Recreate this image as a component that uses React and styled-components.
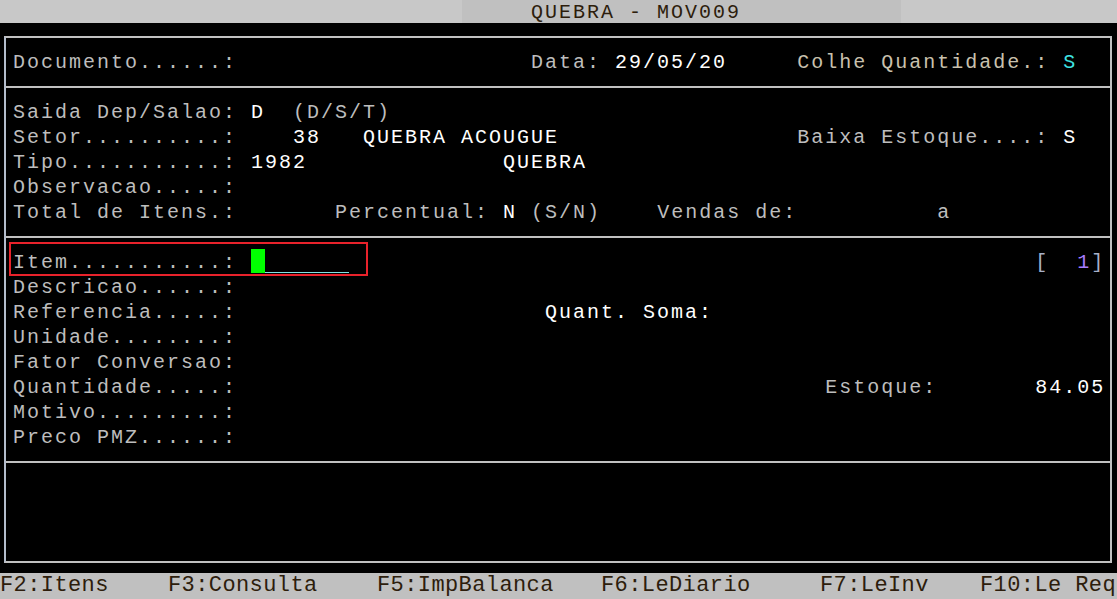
import React from 'react';
import styled, { createGlobalStyle, css } from 'styled-components';

const GlobalStyle = createGlobalStyle`
	html, body {
		margin: 0;
		padding: 0;
		background: #000;
	}
`;

const mono = css`
	font-family: 'Liberation Mono', 'DejaVu Sans Mono', monospace;
	font-size: 20px;
	letter-spacing: 2px;
	white-space: pre;
`;

const tones = {
	label: '#bdbdbd',
	value: '#ffffff',
	warm: '#c9c1ae',
	cyan: '#3fe3e3',
	bracket: '#a7b0c8',
	violet: '#a77cff'
};

const Screen = styled.div`
	width: 1117px;
	height: 599px;
	background: #000;
	display: flex;
	flex-direction: column;
	overflow: hidden;
`;

const TitleBar = styled.div`
	display: flex;
	height: 23px;
	flex: none;
`;

const TitleSide = styled.div`
	width: ${p => p.width || 'auto'};
	flex: ${p => (p.width ? 'none' : 1)};
	background: #c8c8c8;
`;

const TitleText = styled.div`
	${mono};
	width: 439px;
	padding-left: 69px;
	box-sizing: border-box;
	background: #c0c0c0;
	color: #2d1d0c;
	line-height: 25px;
	height: 23px;
	overflow: hidden;
`;

const Frame = styled.div`
	margin: 13px 0 0 4px;
	width: 1108px;
	height: 527px;
	box-sizing: border-box;
	border: 2px solid #c0c0c0;
	border-left-color: #b3bccb;
	display: flex;
	flex-direction: column;
	flex: none;
`;

const Section = styled.div`
	padding: ${p => (p.empty ? 0 : '11px 0 12px 7px')};
	flex: ${p => (p.empty ? 1 : 'none')};
	& + & {
		border-top: 2px solid #c0c0c0;
	}
`;

const Line = styled.div`
	${mono};
	position: relative;
	height: 25px;
	line-height: 27px;
	color: ${tones.label};
	${p => p.marked && css`
		&::after {
			content: '';
			position: absolute;
			left: -4px;
			top: -7px;
			width: 359px;
			height: 34px;
			box-sizing: border-box;
			border: 2px solid #e8222b;
		}
	`}
`;

const Text = styled.span`
	color: ${p => tones[p.tone] || tones.label};
`;

const Field = styled.span`
	display: inline-flex;
	vertical-align: top;
	width: 98px;
	height: 24px;
`;

const Cursor = styled.span`
	width: 14px;
	height: 24px;
	background: #00ff00;
`;

const Underline = styled.span`
	width: 84px;
	height: 24px;
	box-sizing: border-box;
	border-bottom: 1px solid #7fe3e3;
`;

const KeyBar = styled.div`
	margin-top: auto;
	height: 26px;
	background: #c0c0c0;
	display: flex;
	flex: none;
	overflow: hidden;
`;

const Key = styled.div`
	font-family: 'Liberation Mono', 'DejaVu Sans Mono', monospace;
	font-size: 22px;
	letter-spacing: 0.4px;
	white-space: pre;
	line-height: 26px;
	color: #2d1d0c;
	width: ${p => p.width || 'auto'};
	flex: none;
`;

const header = [
	[[0, 'Documento......:'], [37, 'Data: '], [43, '29/05/20', 'value'], [56, 'Colhe Quantidade.: ', 'warm'], [75, 'S', 'cyan']]
];

const general = [
	[[0, 'Saida Dep/Salao: '], [17, 'D', 'value'], [18, '  (D/S/T)']],
	[[0, 'Setor..........:'], [20, '38', 'value'], [25, 'QUEBRA ACOUGUE', 'value'], [56, 'Baixa Estoque....: '], [75, 'S', 'value']],
	[[0, 'Tipo...........: '], [17, '1982', 'value'], [35, 'QUEBRA', 'value']],
	[[0, 'Observacao.....:']],
	[[0, 'Total de Itens.:'], [23, 'Percentual: '], [35, 'N', 'value'], [36, ' (S/N)'], [46, 'Vendas de:'], [66, 'a']]
];

const items = [
	[[0, 'Item...........: '], [17, 'field'], [73, '[', 'bracket'], [76, '1', 'violet'], [77, ']', 'bracket']],
	[[0, 'Descricao......:']],
	[[0, 'Referencia.....:'], [38, 'Quant. Soma:', 'value']],
	[[0, 'Unidade........:']],
	[[0, 'Fator Conversao:']],
	[[0, 'Quantidade.....:'], [58, 'Estoque:'], [73, '84.05', 'value']],
	[[0, 'Motivo.........:']],
	[[0, 'Preco PMZ......:']]
];

const keys = [
	{ text: 'F2:Itens', width: '168px' },
	{ text: 'F3:Consulta', width: '209px' },
	{ text: 'F5:ImpBalanca', width: '224px' },
	{ text: 'F6:LeDiario', width: '219px' },
	{ text: 'F7:LeInv', width: '160px' },
	{ text: 'F10:Le Req' }
];

// lay segments out on the 14px terminal grid, padding with spaces
const renderLine = (segments, index, marked) => {
	let col = 0;
	const parts = [];
	segments.forEach(([at, text, tone], i) => {
		if (at > col) parts.push(' '.repeat(at - col));
		if (text === 'field') {
			parts.push(
				<Field key={i}>
					<Cursor />
					<Underline />
				</Field>
			);
			col = at + 7;
			return;
		}
		parts.push(<Text key={i} tone={tone}>{text}</Text>);
		col = at + text.length;
	});
	return <Line key={index} marked={marked}>{parts}</Line>;
};

export default function App() {
	return (
		<Screen>
			<GlobalStyle />
			<TitleBar>
				<TitleSide width="462px" />
				<TitleText>QUEBRA - MOV009</TitleText>
				<TitleSide />
			</TitleBar>
			<Frame>
				<Section>{header.map((l, i) => renderLine(l, i))}</Section>
				<Section>{general.map((l, i) => renderLine(l, i))}</Section>
				<Section>{items.map((l, i) => renderLine(l, i, i === 0))}</Section>
				<Section empty />
			</Frame>
			<KeyBar>
				{keys.map(k => (
					<Key key={k.text} width={k.width}>{k.text}</Key>
				))}
			</KeyBar>
		</Screen>
	);
}
